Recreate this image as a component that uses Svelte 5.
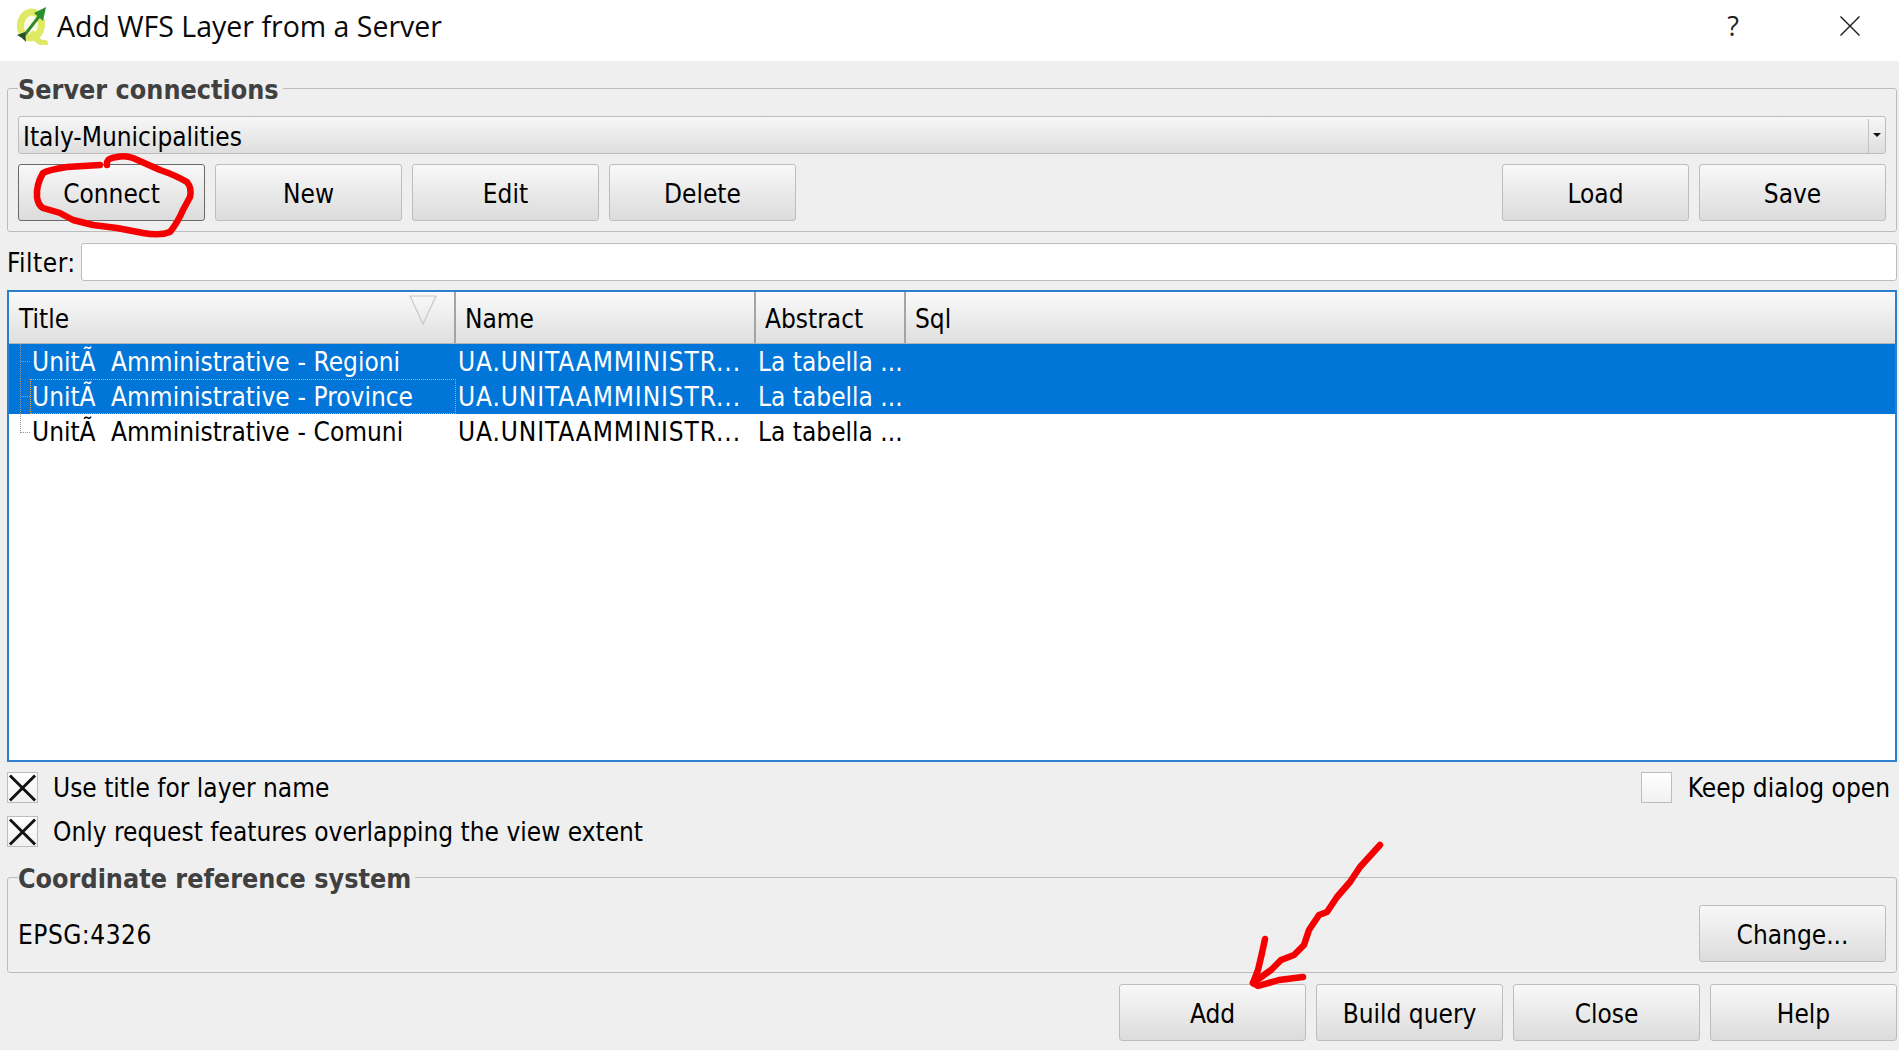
<script>
  const leftButtons = ['Connect', 'New', 'Edit', 'Delete'];
  const rows = [
    { title: 'UnitÃ  Amministrative - Regioni', sel: true },
    { title: 'UnitÃ  Amministrative - Province', sel: true, focus: true },
    { title: 'UnitÃ  Amministrative - Comuni', sel: false }
  ];
</script>

<div class="window">
  <header class="titlebar">
    <svg class="logo" viewBox="0 0 36 40" width="36" height="40" aria-hidden="true">
      <ellipse cx="17" cy="20" rx="10.5" ry="13" fill="#fbfce8" stroke="#dfe963" stroke-width="7" transform="rotate(8 17 20)"/>
      <path d="M19 29C21 33 24 38 31 38" fill="none" stroke="#dfe963" stroke-width="6" stroke-linecap="round"/>
      <path d="M9 32 27 9" stroke="#2f8a2c" stroke-width="3"/>
      <path d="M32 2 29 16 20 8z" fill="#2c8f2e"/>
      <path d="M3 30 11 27 12 37 8 33z" fill="#23502a"/>
    </svg>
    <span class="title">Add WFS Layer from a Server</span>
    <span class="help">?</span>
    <svg class="close" viewBox="0 0 20 20" width="20" height="20" aria-hidden="true">
      <path d="M0.5 0.5 19.5 19.5M19.5 0.5 0.5 19.5" stroke="#1a1a1a" stroke-width="1.4" fill="none"/>
    </svg>
  </header>

  <main class="body">
    <fieldset class="group server">
      <legend>Server connections</legend>
      <div class="combo">
        <span class="combo-text">Italy-Municipalities</span>
        <span class="combo-arrow"></span>
      </div>
      <div class="btn-row">
        {#each leftButtons as b, i}
          <button class="btn" class:default={i === 0}>{b}</button>
        {/each}
        <span class="spacer"></span>
        <button class="btn">Load</button>
        <button class="btn">Save</button>
      </div>
    </fieldset>

    <div class="filter">
      <span class="filter-label">Filter:</span>
      <div class="input"></div>
    </div>

    <div class="tree">
      <div class="thead">
        <div class="th c1">Title
          <svg class="sort" viewBox="0 0 28 30" width="28" height="30" aria-hidden="true">
            <path d="M1 1H27L14 29Z" fill="none" stroke="#c8c8c8" stroke-width="1.2"/>
          </svg>
        </div>
        <div class="th c2">Name</div>
        <div class="th c3">Abstract</div>
        <div class="th c4">Sql</div>
      </div>
      <div class="tbody">
        {#each rows as r, i}
          <div class="row" class:sel={r.sel}>
            <span class="guide" class:last={i === rows.length - 1}></span>
            <div class="cell c1 first" class:focus={r.focus}>{r.title}</div>
            <div class="cell c2 code">UA.UNITAAMMINISTR...</div>
            <div class="cell c3">La tabella ...</div>
          </div>
        {/each}
      </div>
    </div>

    <div class="opt-row first-opt">
      <span class="check">
        <svg viewBox="0 0 30 30" width="30" height="30" aria-hidden="true"><path d="M2 2 28 28M28 2 2 28" stroke="#111" stroke-width="3"/></svg>
      </span>
      <span class="opt-label">Use title for layer name</span>
      <span class="spacer"></span>
      <span class="check"></span>
      <span class="opt-label keep">Keep dialog open</span>
    </div>
    <div class="opt-row second-opt">
      <span class="check">
        <svg viewBox="0 0 30 30" width="30" height="30" aria-hidden="true"><path d="M2 2 28 28M28 2 2 28" stroke="#111" stroke-width="3"/></svg>
      </span>
      <span class="opt-label">Only request features overlapping the view extent</span>
    </div>

    <fieldset class="group crs">
      <legend>Coordinate reference system</legend>
      <div class="crs-row">
        <span class="epsg">EPSG:4326</span>
        <button class="btn">Change...</button>
      </div>
    </fieldset>

    <div class="footer">
      <button class="btn">Add</button>
      <button class="btn">Build query</button>
      <button class="btn">Close</button>
      <button class="btn">Help</button>
    </div>
  </main>

  <svg class="ink" viewBox="0 0 1899 1050" width="1899" height="1050" aria-hidden="true">
    <path d="M100 165 67 167 Q48 170 43 173 Q36 185 37 197 Q38 205 43 208 L60 213 L73 220 L93 225 L117 228 L143 233 Q160 236 170 232 Q178 222 183 210 L190 197 Q192 188 187 182 Q175 175 160 170 L133 158 Q125 155 117 157 Q108 158 107 162 L107 165"/>
    <path d="M1380 845 1360 867 1350 882 1337 897 1327 912 1319 915 1309 930 1304 945 1294 955 1281 960 1271 970 1253 983"/>
    <path d="M1265 939 1262 953 1258 970 1253 983 1258 986 1279 980 1303 977"/>
  </svg>
</div>

<style>
  :global(body) { margin: 0; background: #efefef; }
  .window {
    position: relative;
    width: 1899px;
    height: 1050px;
    overflow: hidden;
    background: #efefef;
    color: #000;
    font-family: "DejaVu Sans Condensed", "DejaVu Sans", sans-serif;
    font-size: 26px;
  }
  .titlebar {
    height: 61px;
    background: #fff;
    display: flex;
    align-items: center;
    padding: 0 39px 10px 14px;
    box-sizing: border-box;
  }
  .logo { margin-right: 7px; margin-bottom: 1px; }
  .title {
    flex: 1;
    font-family: "Open Sans", sans-serif;
    font-size: 28.5px;
    color: #0a0a0a;
  }
  .help { font-family: "Open Sans", sans-serif; font-size: 27px; margin-right: 101px; color: #222; }
  .body { padding: 11px 2px 0 7px; display: flex; flex-direction: column; }
  .group {
    margin: 0;
    padding: 12px 10px 10px 10px;
    border: 1px solid #bcbcbc;
    border-radius: 3px;
    min-width: 0;
  }
  legend {
    padding: 2px 4px 0 0;
    margin-left: 0;
    box-sizing: border-box;
    font-weight: bold;
    font-size: 26.7px;
    color: #404040;
    line-height: 32px;
    height: 32px;
  }
  .combo {
    height: 38px;
    box-sizing: border-box;
    border: 1px solid #bdbdbd;
    border-radius: 3px;
    background: linear-gradient(#f7f7f7, #dedede);
    display: flex;
    align-items: center;
    padding-top: 2px;
  }
  .combo-text { flex: 1; padding-left: 4px; position: relative; top: 1px; }
  .combo-arrow {
    width: 16px;
    height: 100%;
    border-left: 1px solid #c2c2c2;
    position: relative;
  }
  .combo-arrow::after {
    content: "";
    position: absolute;
    left: 4px;
    top: 14px;
    border: 4px solid transparent;
    border-top: 4px solid #111;
  }
  .btn-row { display: flex; gap: 10px; margin-top: 10px; }
  .spacer { flex: 1; }
  .btn {
    width: 187px;
    height: 57px;
    box-sizing: border-box;
    border: 1px solid #bdbdbd;
    border-radius: 3px;
    background: linear-gradient(#f8f8f8, #dcdcdc);
    font: inherit;
    color: #000;
    padding: 2px 0 0;
  }
  .btn.default { border-color: #6a6a6a; }
  .filter { display: flex; align-items: center; margin-top: 11px; }
  .filter-label { width: 74px; letter-spacing: 0.5px; padding-top: 2px; }
  .input {
    flex: 1;
    height: 38px;
    box-sizing: border-box;
    background: #fff;
    border: 1px solid #bdbdbd;
    border-radius: 3px;
  }
  .tree {
    margin-top: 9px;
    height: 472px;
    box-sizing: border-box;
    border: 2px solid #2c7fcf;
    background: #fff;
  }
  .thead {
    display: flex;
    height: 52px;
    box-sizing: border-box;
    background: linear-gradient(#fafafa, #dfdfdf);
    border-bottom: 1px solid #b4b4b4;
  }
  .th {
    position: relative;
    box-sizing: border-box;
    display: flex;
    align-items: center;
    padding: 2px 0 0 9px;
    border-right: 2px solid #a4a4a4;
  }
  .th.c1 { padding-left: 10px; }
  .c1 { width: 447px; flex: none; }
  .c2 { width: 300px; flex: none; }
  .c3 { width: 150px; flex: none; }
  .th.c4 { flex: 1; border-right: 0; }
  .sort { position: absolute; right: 17px; top: 3px; }
  .tbody { display: flex; flex-direction: column; }
  .row {
    position: relative;
    display: flex;
    height: 35px;
    line-height: 37px;
    white-space: pre;
  }
  .row.sel { background: #0275d8; color: #fff; }
  .guide {
    position: absolute;
    left: 11px;
    top: 0;
    width: 9px;
    height: 18px;
    border-left: 1px dotted #9a9a9a;
    border-bottom: 1px dotted #9a9a9a;
  }
  .row:not(.last) .guide:not(.last) { height: 100%; border-bottom: 0; }
  .row:not(.last) .guide:not(.last)::after {
    content: "";
    position: absolute;
    left: 0;
    top: 17px;
    width: 9px;
    border-top: 1px dotted #9a9a9a;
  }
  .cell { box-sizing: border-box; padding-left: 2px; overflow: hidden; height: 35px; }
  .code { letter-spacing: 0.9px; }
  .cell.first { padding-left: 23px; position: relative; word-spacing: 0.3px; }
  .cell.first.focus::before {
    content: "";
    position: absolute;
    left: 21px;
    right: 0;
    top: 0;
    bottom: 0;
    border: 1px dotted #f0a040;
  }
  .opt-row { display: flex; align-items: center; height: 31px; }
  .first-opt { margin-top: 10px; }
  .second-opt { margin-top: 13px; }
  .check {
    width: 31px;
    height: 31px;
    box-sizing: border-box;
    background: linear-gradient(#fff, #f1f1f1);
    border: 1px solid #bdbdbd;
    flex: none;
    display: flex;
    align-items: center;
    justify-content: center;
  }
  .opt-label { margin-left: 15px; }
  .keep { margin-left: 16px; margin-right: 7px; }
  .crs { margin-top: 14px; padding: 12px 10px 10px 10px; }
  .crs-row { display: flex; align-items: center; justify-content: space-between; }
  .epsg { letter-spacing: 0.5px; padding-top: 2px; }
  .footer { display: flex; justify-content: flex-end; gap: 10px; margin-top: 11px; }
  .ink {
    position: absolute;
    left: 0;
    top: 0;
    pointer-events: none;
  }
  .ink path {
    fill: none;
    stroke: #f40000;
    stroke-width: 6.5;
    stroke-linecap: round;
    stroke-linejoin: round;
  }
</style>
